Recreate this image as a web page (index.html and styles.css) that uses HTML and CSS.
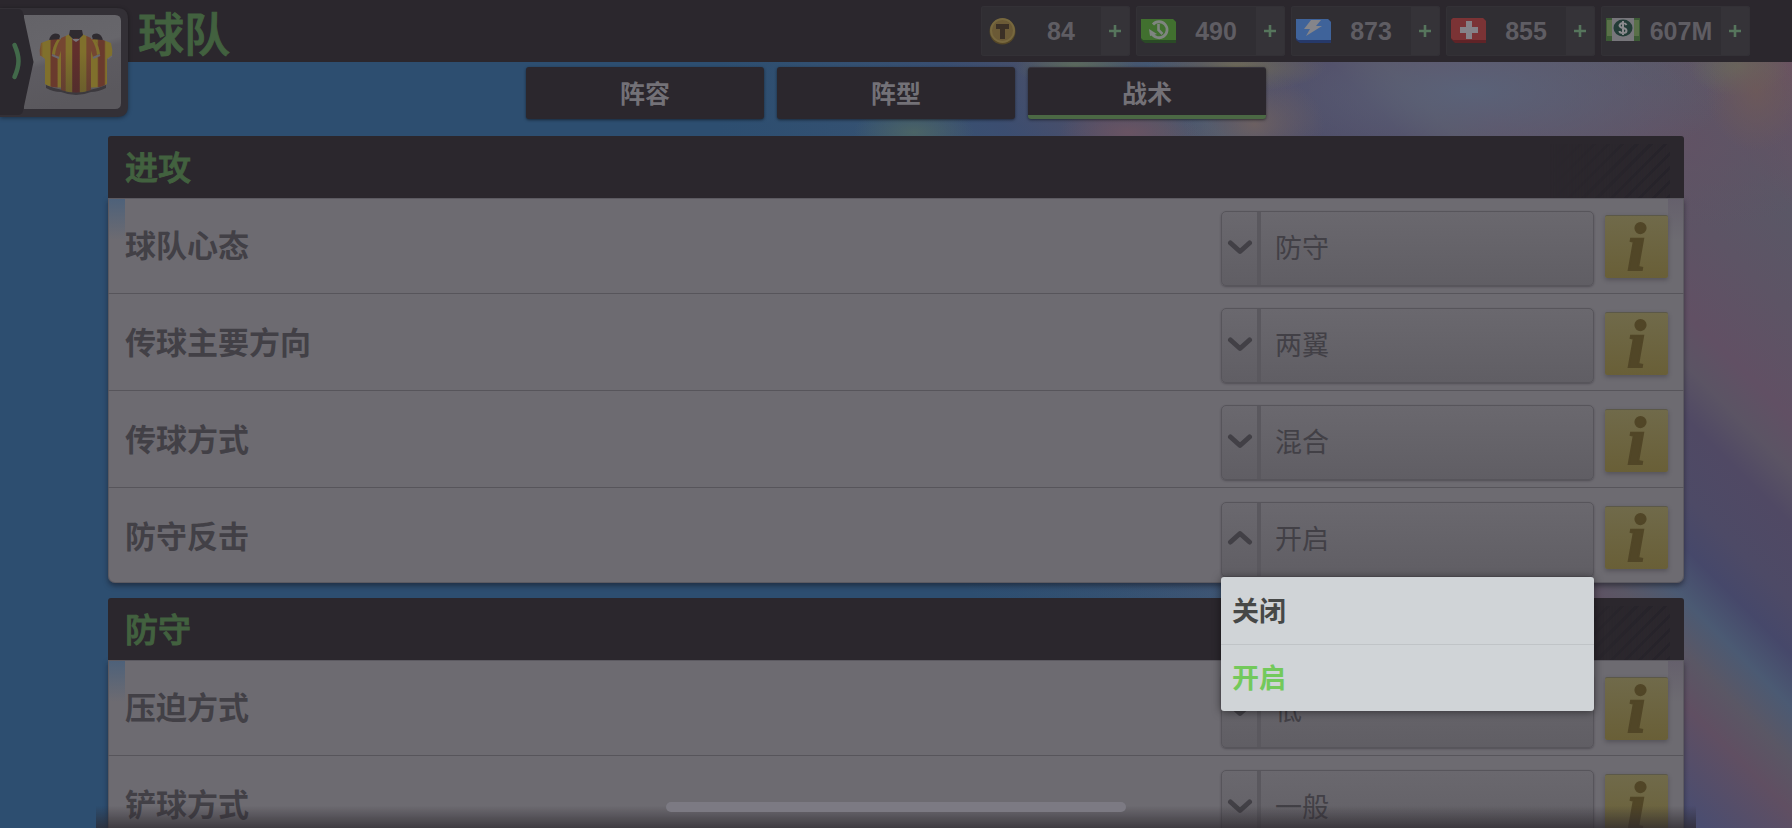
FILE: index.html
```html
<!DOCTYPE html>
<html lang="zh-CN">
<head>
    <meta charset="UTF-8">
    <meta name="viewport" content="width=device-width, initial-scale=1.0">
    <title>球队</title>
    <link rel="stylesheet" href="styles.css">
</head>
<body>
    <!-- Shared icons -->
    <svg class="sprite" aria-hidden="true">
        <symbol id="plus" viewBox="0 0 14 14">
            <path d="M7 1v12M1 7h12" stroke="#56755c" stroke-width="2.6" fill="none"/>
        </symbol>
        <symbol id="chevron" viewBox="0 0 26 16">
            <path d="M3.500 4 13 12.500 22.500 4" stroke="#424046" stroke-width="5" stroke-linecap="round" stroke-linejoin="round" fill="none"/>
        </symbol>
    </svg>

    <!-- Top bar -->
    <header class="topbar">
        <a class="team-badge" href="#" aria-label="返回">
            <svg viewBox="0 0 128 109" width="128" height="109">
                <defs>
                    <linearGradient id="tile" x1="0" y1="0" x2="0.3" y2="1">
                        <stop offset="0" stop-color="#646368"/>
                        <stop offset="0.48" stop-color="#67666b"/>
                        <stop offset="0.55" stop-color="#5e5c62"/>
                        <stop offset="1" stop-color="#5a585d"/>
                    </linearGradient>
                    <linearGradient id="kit" x1="0" x2="1">
                        <stop offset="0" stop-color="#754631"/>
                        <stop offset="0.14" stop-color="#754631"/>
                        <stop offset="0.17" stop-color="#80702c"/>
                        <stop offset="0.36" stop-color="#80702c"/>
                        <stop offset="0.39" stop-color="#612f2c"/>
                        <stop offset="0.61" stop-color="#612f2c"/>
                        <stop offset="0.64" stop-color="#80702c"/>
                        <stop offset="0.83" stop-color="#80702c"/>
                        <stop offset="0.86" stop-color="#754631"/>
                        <stop offset="1" stop-color="#754631"/>
                    </linearGradient>
                    <linearGradient id="kitBack" x1="0" x2="1">
                        <stop offset="0" stop-color="#754631"/>
                        <stop offset="0.14" stop-color="#80702c"/>
                        <stop offset="0.4" stop-color="#80702c"/>
                        <stop offset="0.46" stop-color="#6a3a2d"/>
                        <stop offset="0.68" stop-color="#6a3a2d"/>
                        <stop offset="0.74" stop-color="#80702c"/>
                    </linearGradient>
                    <linearGradient id="kitShade" x1="0" y1="0" x2="0" y2="1">
                        <stop offset="0.3" stop-color="#2b272d" stop-opacity="0"/>
                        <stop offset="1" stop-color="#2b272d" stop-opacity="0.25"/>
                    </linearGradient>
                </defs>
                <path d="M0 0h117q11 0 11 11v87q0 11-11 11H0z" fill="#333036"/>
                <path d="M24 7h91q6 0 6 6v82q0 6-6 6H24z" fill="url(#tile)"/>
                <path d="M0 1h18q4 0 5 4l10.500 49L23 103q-1 4-5 4H0z" fill="#2b282e"/>
                <path d="M14.500 37q4 9 4 16t-4 16" stroke="#42694a" stroke-width="4.500" stroke-linecap="round" stroke-linejoin="round" fill="none"/>
                <path d="M46 77q14 6 30 6t30-6v3q-8 4-15 4-15 6-30 0-8 0-15-4z" fill="#3c393e"/>
                <!-- back row shirts -->
                <path d="M49 33q1-7 6-7.500 5 0 5 3l-2 6z" fill="#2f2b30"/>
                <path d="M103 33q-1-7-6-7.500-5 0-5 3l2 6z" fill="#2f2b30"/>
                <path d="M62 31 49 32l-8 3q-2 7-1 13l5 3v25q8 5 20 3z" fill="url(#kitBack)"/>
                <path d="M90 31l13 1 8 3q2 7 1 13l-5 3v25q-8 5-20 3z" fill="url(#kitBack)"/>
                <path d="M40 48l4 3M112 48l-4 3" stroke="#69666c" stroke-width="1.500"/>
                <!-- front shirt -->
                <path d="M58 31q-5 6-6 15l7 3q3-9 5-17z" fill="#754631"/>
                <path d="M94 31q5 6 6 15l-7 3q-3-9-5-17z" fill="#754631"/>
                <path d="M57 32q-4 6-5 14l3 1q1-9 5-15zM95 32q4 6 5 14l-3 1q-1-9-5-15z" fill="#80702c"/>
                <path d="M61 30l9-4q6 7 12 0l9 4v52q-15 5-30 0z" fill="url(#kit)"/>
                <path d="M61 30l9-4q6 7 12 0l9 4v52q-15 5-30 0z" fill="url(#kitShade)"/>
                <path d="M52 47l7 3M100 47l-7 3" stroke="#69666c" stroke-width="2"/>
                <path d="M70 27q6 8 12 0l-3 5-3 2-3-2z" fill="#77747a"/>
                <path d="M70 22h12l1 5-4 4-3-1-3 1-4-4z" fill="#2f2b30"/>
            </svg>
        </a>
        <h1>球队</h1>
        <div class="resources">
            <button class="chip" type="button">
                <svg class="chip-icon" viewBox="0 0 35 28">
                    <circle cx="16.500" cy="14.500" r="13" fill="#554727"/>
                    <circle cx="16.500" cy="13.500" r="12.500" fill="#77683e"/>
                    <circle cx="16.500" cy="13.500" r="10.500" fill="#6b5a36"/>
                    <path d="M10 7h13v5h-4v10h-5V12h-4z" fill="#3b3026"/>
                </svg>
                <span>84</span>
                <svg class="plus"><use href="#plus"/></svg>
            </button>
            <button class="chip" type="button">
                <svg class="chip-icon" viewBox="0 0 35 28">
                    <path d="M0 2h32l3 3v21H4l-4-3z" fill="#2a4a26"/>
                    <path d="M0 2h32l3 3v18H2l-2-2z" fill="#41702f"/>
                    <path d="M12 7.500a8 8 0 1 1-1 9" stroke="#7f8580" stroke-width="2.800" fill="none"/>
                    <path d="M8 12l8 5-7 2z" fill="#7f8580"/>
                    <path d="M17.500 7v6l4 4" stroke="#7f8580" stroke-width="2.600" fill="none"/>
                </svg>
                <span>490</span>
                <svg class="plus"><use href="#plus"/></svg>
            </button>
            <button class="chip" type="button">
                <svg class="chip-icon" viewBox="0 0 35 28">
                    <path d="M0 2h32l3 3v21H4l-4-3z" fill="#26396a"/>
                    <path d="M0 2h32l3 3v18H2l-2-2z" fill="#3f639a"/>
                    <path d="M15 3h10l-5 6h6L10 19l4-7H8z" fill="#85858a"/>
                </svg>
                <span>873</span>
                <svg class="plus"><use href="#plus"/></svg>
            </button>
            <button class="chip" type="button">
                <svg class="chip-icon" viewBox="0 0 35 28">
                    <path d="M2 1h30l3 3v22H4l-4-4V3z" fill="#5f2327"/>
                    <path d="M2 1h30l3 3v19H2l-2-2V3z" fill="#7b3335"/>
                    <path d="M15 4h6v6h6v6h-6v6h-6v-6H9v-6h6z" fill="#858287"/>
                </svg>
                <span>855</span>
                <svg class="plus"><use href="#plus"/></svg>
            </button>
            <button class="chip" type="button">
                <svg class="chip-icon" viewBox="0 0 35 28">
                    <path d="M0 1h34v23H0z" fill="#3c5a35"/>
                    <path d="M1 3h32v16H1z" fill="#5a7049"/>
                    <path d="M6 1h22v23H6z" fill="#77767b"/>
                    <ellipse cx="17" cy="11" rx="9.500" ry="8.500" fill="#233c37"/>
                    <path d="M20.500 8q-1-2-3.500-2t-3.500 2.300q0 2 3.500 2.700t3.500 2.700q0 2.300-3.500 2.300t-3.500-2M17 4v14" stroke="#8b8b8e" stroke-width="2" fill="none"/>
                </svg>
                <span>607M</span>
                <svg class="plus"><use href="#plus"/></svg>
            </button>
        </div>
    </header>

    <nav class="tabs">
        <button class="tab" type="button">阵容</button>
        <button class="tab" type="button">阵型</button>
        <button class="tab active" type="button">战术</button>
    </nav>

    <main>
        <!-- Attack -->
        <section class="panel">
            <h2>进攻</h2>
            <div class="rows">
                <div class="row">
                    <label for="mentality">球队心态</label>
                    <div class="dropdown">
                        <select id="mentality"><option>防守</option></select>
                        <svg class="chevron"><use href="#chevron"/></svg>
                    </div>
                    <button class="info" type="button">i</button>
                </div>
                <div class="row">
                    <label for="passFocus">传球主要方向</label>
                    <div class="dropdown">
                        <select id="passFocus"><option>两翼</option></select>
                        <svg class="chevron"><use href="#chevron"/></svg>
                    </div>
                    <button class="info" type="button">i</button>
                </div>
                <div class="row">
                    <label for="passStyle">传球方式</label>
                    <div class="dropdown">
                        <select id="passStyle"><option>混合</option></select>
                        <svg class="chevron"><use href="#chevron"/></svg>
                    </div>
                    <button class="info" type="button">i</button>
                </div>
                <div class="row">
                    <label for="counter">防守反击</label>
                    <div class="dropdown open">
                        <select id="counter"><option>开启</option></select>
                        <svg class="chevron"><use href="#chevron"/></svg>
                        <div class="menu">
                            <button type="button">关闭</button>
                            <button class="selected" type="button">开启</button>
                        </div>
                    </div>
                    <button class="info" type="button">i</button>
                </div>
            </div>
        </section>

        <!-- Defence -->
        <section class="panel">
            <h2>防守</h2>
            <div class="rows">
                <div class="row">
                    <label for="pressing">压迫方式</label>
                    <div class="dropdown">
                        <select id="pressing"><option>低</option></select>
                        <svg class="chevron"><use href="#chevron"/></svg>
                    </div>
                    <button class="info" type="button">i</button>
                </div>
                <div class="row">
                    <label for="tackling">铲球方式</label>
                    <div class="dropdown">
                        <select id="tackling"><option>一般</option></select>
                        <svg class="chevron"><use href="#chevron"/></svg>
                    </div>
                    <button class="info" type="button">i</button>
                </div>
            </div>
        </section>
    </main>

    <div class="bottom-fade"></div>
    <div class="home-indicator"></div>
</body>
</html>
```
FILE: styles.css
```css
* {
    box-sizing: border-box;
}

body {
    margin: 0;
    height: 100vh;
    overflow: hidden;
    font-family: "Liberation Sans", "Noto Sans CJK SC", sans-serif;
    color: #424046;
    background:
        radial-gradient(ellipse 50px 60px at 98% 11%, rgba(110, 90, 88, 0.8), transparent),
        radial-gradient(ellipse 50px 30px at 97% 8%, rgba(104, 110, 92, 0.8), transparent),
        radial-gradient(ellipse 90px 26px at 69% 8%, rgba(118, 112, 84, 0.8), transparent),
        radial-gradient(ellipse 60px 22px at 60% 8%, rgba(96, 112, 90, 0.8), transparent),
        radial-gradient(ellipse 60px 30px at 51% 16%, rgba(80, 104, 98, 0.8), transparent),
        radial-gradient(ellipse 70px 30px at 63% 16%, rgba(108, 84, 98, 0.9), transparent),
        radial-gradient(ellipse 70px 50px at 70% 15%, rgba(112, 98, 96, 0.9), transparent),
        linear-gradient(to right, #2d4e70 40%, rgba(45, 78, 112, 0) 72%),
        radial-gradient(ellipse 260px 90px at 82% 11%, #5a6278, transparent),
        radial-gradient(ellipse 200px 90px at 93% 17%, #615264, transparent),
        linear-gradient(225deg, #6a5262 2%, #5a5766 8%, #5d5465 12%, #615064 16%, #5b5464 18%, #504964 20%, #4d4a66 23%, #46486a 25%, #4b5a73 27%, #5a5765 29%, #604f62 31%, #4a4d70 35%, #4a5a76 40%, #2d4e70 54%);
}

button,
select {
    margin: 0;
    padding: 0;
    border: none;
    font-family: inherit;
    color: inherit;
    cursor: pointer;
}

.sprite {
    position: absolute;
    width: 0;
    height: 0;
}

/* Top bar */
.topbar {
    display: flex;
    align-items: flex-start;
    height: 62px;
    padding-right: 42px;
    background-color: #2b272d;
}

.team-badge {
    position: relative;
    z-index: 1;
    margin-top: 8px;
    height: 109px;
    filter: drop-shadow(0 1px 2px rgba(0, 0, 0, 0.4));
}

.team-badge svg {
    display: block;
}

h1,
h2 {
    font-weight: 500;
    color: #42613f;
    -webkit-text-stroke: 1px #42613f;
}

h1 {
    flex: 1;
    margin: 0 0 0 10px;
    font-size: 46px;
    line-height: 70px;
}

.resources {
    display: flex;
    gap: 6px;
    margin-top: 6px;
}

.chip {
    display: grid;
    grid-template-columns: 35px 1fr 29px;
    align-items: center;
    width: 149px;
    height: 50px;
    padding-left: 5px;
    border-radius: 3px;
    background: linear-gradient(to right, #302e33 120px, #353338 120px);
    box-shadow: inset 0 0 0 1px #333136;
    font-size: 25px;
    font-weight: bold;
    color: #5f5d63;
}

.chip-icon {
    width: 35px;
    height: 28px;
}

.plus {
    width: 14px;
    height: 14px;
    margin-left: 7px;
}

/* Tabs */
.tabs {
    display: flex;
    justify-content: center;
    gap: 13px;
    padding-top: 5px;
}

.tab {
    width: 238px;
    height: 52px;
    padding-bottom: 3px;
    border-radius: 3px;
    background-color: #2b272d;
    box-shadow: 0 1px 3px rgba(0, 0, 0, 0.5);
    font-size: 25px;
    font-weight: bold;
    color: #737177;
}

.tab.active {
    padding-bottom: 0;
    border-top: 1px solid #37343c;
    border-bottom: 4px solid #4b6844;
}

/* Panels */
main {
    padding: 17px 108px 0;
}

.panel {
    margin-bottom: 15px;
}

h2 {
    position: relative;
    height: 62px;
    margin: 0;
    padding-left: 17px;
    border-radius: 3px 3px 0 0;
    background-color: #2b272d;
    font-size: 33px;
    line-height: 65px;
}

h2::after {
    content: "";
    position: absolute;
    top: 8px;
    right: 14px;
    bottom: 0;
    width: 120px;
    background: repeating-linear-gradient(135deg, #26232a 0 3px, #2b272d 3px 10px);
    -webkit-mask-image: linear-gradient(to right, transparent, #000);
    mask-image: linear-gradient(to right, transparent, #000);
}

.rows {
    border-radius: 0 0 7px 7px;
    background:
        linear-gradient(#4d617a, #6d6b71) left top / 17px 42px no-repeat,
        linear-gradient(#65606c, #6d6b71) right top / 16px 42px no-repeat,
        #6d6b71;
    box-shadow: inset 0 0 0 1px #5c5a61, 0 3px 5px rgba(20, 20, 30, 0.5);
}

.row {
    display: flex;
    align-items: flex-start;
    padding: 14px 16px 7px 17px;
    border-bottom: 1px solid #57555b;
}

.row:first-child {
    padding-top: 13px;
}

.row:last-child {
    padding-bottom: 6px;
    border-bottom: none;
}

.row label {
    flex: 1;
    font-size: 31px;
    font-weight: bold;
    line-height: 72px;
}

/* Dropdown */
.dropdown {
    position: relative;
    width: 373px;
}

.dropdown select {
    display: block;
    appearance: none;
    width: 100%;
    height: 75px;
    padding-left: 53px;
    border: 1px solid #57555b;
    border-radius: 5px;
    background:
        linear-gradient(#5a585e, #5a585e) 35px 0 / 4px 100% no-repeat,
        linear-gradient(#6a686e, #605e64);
    box-shadow: 0 1px 2px rgba(40, 38, 44, 0.4);
    font-size: 27px;
}

.chevron {
    position: absolute;
    left: 6px;
    top: 28px;
    width: 26px;
    height: 16px;
    pointer-events: none;
}

.open .chevron {
    transform: rotate(180deg);
}

.menu {
    position: absolute;
    z-index: 1;
    top: 100%;
    left: 0;
    right: 0;
    border-radius: 3px;
    background-color: #d0d4d7;
    box-shadow: 0 1px 8px rgba(0, 0, 0, 0.5);
}

.menu button {
    display: block;
    width: 100%;
    height: 67px;
    padding: 0 0 3px 11px;
    background: none;
    font-size: 27px;
    font-weight: bold;
    text-align: left;
    color: #464847;
}

.menu button + button {
    border-top: 1px solid #c0c4c7;
}

.menu .selected {
    color: #73c95b;
}

/* Info button */
.info {
    width: 63px;
    height: 63px;
    margin: 4px 0 0 11px;
    border-top: 1px solid #5b5848;
    border-radius: 2px;
    background: linear-gradient(#706a4a, #695f37);
    box-shadow: 0 2px 4px rgba(50, 48, 54, 0.4);
    font-family: "Liberation Serif", serif;
    font-size: 68px;
    font-style: italic;
    font-weight: bold;
    line-height: 58px;
    color: #514627;
    -webkit-text-stroke: 2px #514627;
}

/* Screen bottom */
.bottom-fade {
    position: fixed;
    left: 96px;
    right: 96px;
    bottom: 0;
    height: 22px;
    background: linear-gradient(rgba(43, 39, 45, 0), rgba(43, 39, 45, 0.7));
    pointer-events: none;
}

.home-indicator {
    position: fixed;
    left: 50%;
    bottom: 16px;
    width: 460px;
    height: 10px;
    margin-left: -230px;
    border-radius: 5px;
    background-color: #7c7a83;
}
```
